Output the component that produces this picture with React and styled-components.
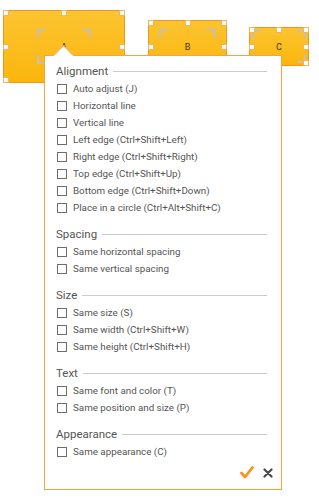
import React from 'react';
import styled, { createGlobalStyle } from 'styled-components';

const GlobalStyle = createGlobalStyle`
    body {
        margin: 0;
        background: #fff;
        font-family: Roboto, "Liberation Sans", sans-serif;
    }
`

const Canvas = styled.div`
    position: relative;
    width: 319px;
    height: 500px;
    overflow: hidden;
    background: #fff;
`

const Shape = styled.div`
    position: absolute;
    box-sizing: border-box;
    left: ${p => p.x}px;
    top: ${p => p.y}px;
    width: ${p => p.w}px;
    height: ${p => p.h}px;
    border: 1px solid #f0961c;
    background: linear-gradient(#fcc431, #fbb60c);
    display: flex;
    align-items: center;
    justify-content: center;
    font-size: 9px;
    color: #3a3226;
`

const Handle = styled.span`
    position: absolute;
    box-sizing: border-box;
    width: 6px;
    height: 6px;
    background: #fff;
    border: 1px solid #f3b35a;
    z-index: 1;
    ${p => p.$v === 'top' ? 'top: -1px;' : p.$v === 'bottom' ? 'bottom: -1px;' : 'top: calc(50% - 3px);'}
    ${p => p.$h === 'left' ? 'left: -1px;' : p.$h === 'right' ? 'right: -1px;' : 'left: calc(50% - 3px);'}
`

const Bracket = styled.span`
    position: absolute;
    box-sizing: border-box;
    width: 9px;
    height: 9px;
    border-color: #c4c0b8;
    border-style: solid;
    border-width: 0;
    ${p => p.$pos.includes('t') ? `top: ${p.$iy}px; border-top-width: 2px;` : `bottom: ${p.$iy}px; border-bottom-width: 2px;`}
    ${p => p.$pos.includes('l') ? `left: ${p.$ix}px; border-left-width: 2px;` : `right: ${p.$ix}px; border-right-width: 2px;`}
`

const Panel = styled.div`
    position: absolute;
    left: 44px;
    top: 55px;
    width: 238px;
    height: 435px;
    box-sizing: border-box;
    background: #fff;
    border: 1px solid #f7a23a;
    padding: 6px 14px 0 11px;
    display: flex;
    flex-direction: column;
    color: #555;
    z-index: 2;
`

const Arrow = styled.span`
    position: absolute;
    left: 11px;
    top: -8px;
    width: 14px;
    height: 14px;
    background: #fff;
    border-top: 1px solid #f7a23a;
    border-left: 1px solid #f7a23a;
    transform: rotate(45deg);
`

const Section = styled.section`
    display: flex;
    flex-direction: column;
    & + & {
        margin-top: 9px;
    }
`

const Heading = styled.div`
    height: 18px;
    display: flex;
    align-items: center;
    gap: 5px;
    font-size: 11.5px;
    color: #555;

    &::after {
        content: '';
        flex: 1;
        height: 1px;
        background: #cbcbcb;
    }
`

const Item = styled.label`
    height: 17px;
    display: flex;
    align-items: center;
    gap: 6px;
    font-size: 9.8px;
    color: #555;
    padding-left: 1px;
`

const Box = styled.span`
    width: 10px;
    height: 10px;
    box-sizing: border-box;
    border: 1px solid #6d6d6d;
    background: #fff;
    flex-shrink: 0;
`

const Footer = styled.div`
    margin-top: auto;
    height: 28px;
    margin-bottom: 4px;
    margin-right: -6px;
    display: flex;
    justify-content: flex-end;
    align-items: center;
    gap: 9px;
`

const IconButton = styled.button`
    border: 0;
    background: none;
    padding: 0;
    display: flex;
`

const sections = [
    { title: 'Alignment', items: ['Auto adjust (J)', 'Horizontal line', 'Vertical line', 'Left edge (Ctrl+Shift+Left)', 'Right edge (Ctrl+Shift+Right)', 'Top edge (Ctrl+Shift+Up)', 'Bottom edge (Ctrl+Shift+Down)', 'Place in a circle (Ctrl+Alt+Shift+C)'] },
    { title: 'Spacing', items: ['Same horizontal spacing', 'Same vertical spacing'] },
    { title: 'Size', items: ['Same size (S)', 'Same width (Ctrl+Shift+W)', 'Same height (Ctrl+Shift+H)'] },
    { title: 'Text', items: ['Same font and color (T)', 'Same position and size (P)'] },
    { title: 'Appearance', items: ['Same appearance (C)'] },
]

const handles = [
    ['top', 'left'], ['top', 'mid'], ['top', 'right'],
    ['mid', 'left'], ['mid', 'right'],
    ['bottom', 'left'], ['bottom', 'mid'], ['bottom', 'right'],
]

const Node = ({ label, ix, iy, ...rest }) => (
    <Shape {...rest}>
        {['tl', 'tr', 'bl', 'br'].map(p => <Bracket key={p} $pos={p} $ix={ix} $iy={iy} />)}
        {handles.map(([v, h]) => <Handle key={v + h} $v={v} $h={h} />)}
        {label}
    </Shape>
)

export default function App() {
    return (
        <Canvas>
            <GlobalStyle />
            <Node label="A" x={3} y={10} w={122} h={73} ix={33} iy={18} />
            <Node label="B" x={148} y={20} w={79} h={53} ix={10} iy={8} />
            <Node label="C" x={249} y={27} w={60} h={39} ix={2} iy={2} />
            <Panel>
                <Arrow />
                {sections.map(s => (
                    <Section key={s.title}>
                        <Heading>{s.title}</Heading>
                        {s.items.map(i => (
                            <Item key={i}><Box />{i}</Item>
                        ))}
                    </Section>
                ))}
                <Footer>
                    <IconButton aria-label="ok">
                        <svg width="14" height="13" viewBox="0 0 14 13">
                            <path d="M1.5 7 L5 11 L12.5 1.5" fill="none" stroke="#f7931e" strokeWidth="2.8" strokeLinecap="round" strokeLinejoin="round" />
                        </svg>
                    </IconButton>
                    <IconButton aria-label="close">
                        <svg width="10" height="10" viewBox="0 0 10 10">
                            <path d="M1.5 1.5 L8.5 8.5 M8.5 1.5 L1.5 8.5" stroke="#4a4a4a" strokeWidth="2.2" strokeLinecap="round" />
                        </svg>
                    </IconButton>
                </Footer>
            </Panel>
        </Canvas>
    )
}
